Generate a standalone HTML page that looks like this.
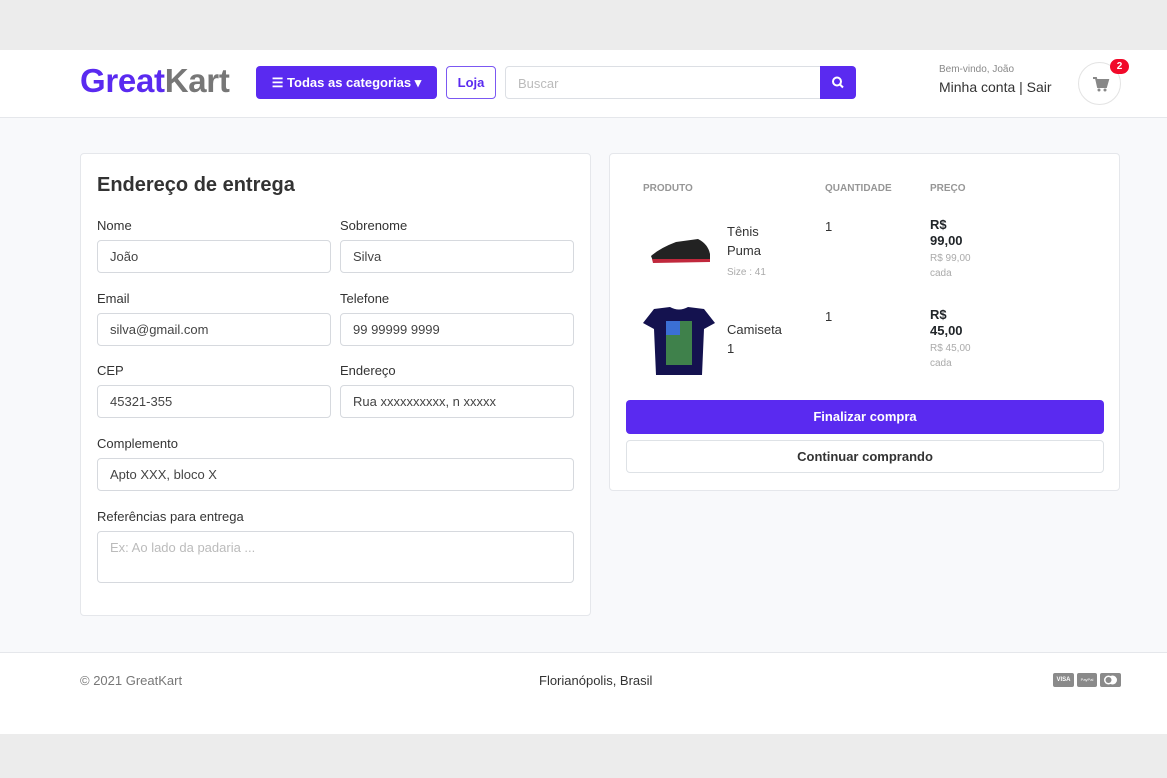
<!DOCTYPE html>
<html><head><meta charset="utf-8"><style>
*{box-sizing:border-box;margin:0;padding:0}
body{width:1167px;height:778px;background:#ececec;font-family:"Liberation Sans",sans-serif;color:#212529;position:relative;overflow:hidden}
.abs{position:absolute}
header{position:absolute;left:0;top:50px;width:1167px;height:68px;background:#fff;border-bottom:1px solid #e5e7eb}
main{position:absolute;left:0;top:118px;width:1167px;height:534px;background:#f8f9fb}
footer{position:absolute;left:0;top:652px;width:1167px;height:82px;background:#fff;border-top:1px solid #e5e7eb}
.card{position:absolute;background:#fff;border:1px solid #e5e7eb;border-radius:4px}
.lbl{position:absolute;font-size:13px;color:#333}
.inp{position:absolute;height:33px;border:1px solid #d6d9de;border-radius:4px;font-size:13px;color:#444;padding:8px 12px;width:234px}
.btn{position:absolute;border-radius:4px;font-size:13px;font-weight:bold;text-align:center}
.th{position:absolute;font-size:10px;font-weight:bold;color:#969696}
.t{position:absolute;font-size:13px;color:#333}
</style></head><body>
<header>
<div class="abs" style="left:80px;top:12px;font-size:33px;font-weight:bold;letter-spacing:-0.3px"><span style="color:#5a2af0">Great</span><span style="color:#777">Kart</span></div>
<div class="btn" style="left:256px;top:16px;width:181px;height:33px;background:#5a2af0;color:#fff;line-height:33px">☰ Todas as categorias ▾</div>
<div class="btn" style="left:446px;top:16px;width:50px;height:33px;border:1px solid #7b58f2;color:#5a2af0;line-height:31px">Loja</div>
<div class="abs" style="left:505px;top:16px;width:316px;height:33px;border:1px solid #dcdfe4;border-radius:4px 0 0 4px;font-size:13px;color:#bbb;padding:9px 12px">Buscar</div>
<div class="abs" style="left:820px;top:16px;width:36px;height:33px;background:#5a2af0;border-radius:0 4px 4px 0"><svg width="36" height="33"><circle cx="17" cy="15.5" r="4" stroke="#fff" stroke-width="2" fill="none"/><line x1="20" y1="18.5" x2="23" y2="21.5" stroke="#fff" stroke-width="2"/></svg></div>
<div class="abs" style="left:939px;top:14px;font-size:10px;color:#888">Bem-vindo, João</div>
<div class="abs" style="left:939px;top:29px;font-size:14px;color:#333">Minha conta | Sair</div>
<div class="abs" style="left:1078px;top:12px;width:43px;height:43px;border:1px solid #e3e3e3;border-radius:50%"><svg width="43" height="43"><path d="M14 15h3l2 9h8l2-7h-11" stroke="#888" stroke-width="2" fill="#888"/><circle cx="20" cy="27" r="1.5" fill="#888"/><circle cx="26" cy="27" r="1.5" fill="#888"/></svg></div>
<div class="abs" style="left:1110px;top:9px;width:19px;height:15px;background:#f10a2a;border-radius:8px;color:#fff;font-size:10px;font-weight:bold;text-align:center;line-height:15px">2</div>
</header>
<main>
<div class="card" style="left:80px;top:35px;width:511px;height:463px">
<div class="abs" style="left:16px;top:20px;font-size:20px;font-weight:bold;color:#333">Endereço de entrega</div>
<div class="lbl" style="left:16px;top:64px">Nome</div><div class="lbl" style="left:259px;top:64px">Sobrenome</div>
<div class="inp" style="left:16px;top:86px">João</div><div class="inp" style="left:259px;top:86px">Silva</div>
<div class="lbl" style="left:16px;top:137px">Email</div><div class="lbl" style="left:259px;top:137px">Telefone</div>
<div class="inp" style="left:16px;top:159px">silva@gmail.com</div><div class="inp" style="left:259px;top:159px">99 99999 9999</div>
<div class="lbl" style="left:16px;top:209px">CEP</div><div class="lbl" style="left:259px;top:209px">Endereço</div>
<div class="inp" style="left:16px;top:231px">45321-355</div><div class="inp" style="left:259px;top:231px">Rua xxxxxxxxxx, n xxxxx</div>
<div class="lbl" style="left:16px;top:282px">Complemento</div>
<div class="inp" style="left:16px;top:304px;width:477px">Apto XXX, bloco X</div>
<div class="lbl" style="left:16px;top:355px">Referências para entrega</div>
<div class="inp" style="left:16px;top:377px;width:477px;height:52px;color:#bbb">Ex: Ao lado da padaria ...</div>
</div>
<div class="card" style="left:609px;top:35px;width:511px;height:338px">
<div class="th" style="left:33px;top:29px">PRODUTO</div><div class="th" style="left:215px;top:29px">QUANTIDADE</div><div class="th" style="left:320px;top:29px">PREÇO</div>
<svg class="abs" style="left:38px;top:82px" width="66" height="30"><path d="M3 20 Q12 12 28 6 L50 3 Q60 8 62 18 L62 24 L5 25Z" fill="#222"/><path d="M4 23 L62 23 L62 26 L5 27Z" fill="#c0283c"/></svg>
<div class="t" style="left:117px;top:68px;line-height:19px">Tênis<br>Puma</div>
<div class="abs" style="left:117px;top:113px;font-size:10px;color:#aaa">Size : 41</div>
<div class="t" style="left:215px;top:65px">1</div>
<div class="abs" style="left:320px;top:63px;font-size:13px;font-weight:bold;line-height:16px">R$<br>99,00</div>
<div class="abs" style="left:320px;top:97px;font-size:10px;color:#aaa;line-height:15px">R$ 99,00<br>cada</div>
<svg class="abs" style="left:32px;top:153px" width="74" height="70"><path d="M12 2 L28 0 Q37 5 46 0 L62 2 L73 16 L62 22 L60 68 L14 68 L12 22 L1 16Z" fill="#14124f"/><rect x="24" y="14" width="26" height="44" fill="#4a9d4a" opacity=".8"/><rect x="24" y="14" width="14" height="14" fill="#3b6fd4"/></svg>
<div class="t" style="left:117px;top:166px;line-height:19px">Camiseta<br>1</div>
<div class="t" style="left:215px;top:155px">1</div>
<div class="abs" style="left:320px;top:153px;font-size:13px;font-weight:bold;line-height:16px">R$<br>45,00</div>
<div class="abs" style="left:320px;top:187px;font-size:10px;color:#aaa;line-height:15px">R$ 45,00<br>cada</div>
<div class="btn" style="left:16px;top:246px;width:478px;height:34px;background:#5a2af0;color:#fff;line-height:34px">Finalizar compra</div>
<div class="btn" style="left:16px;top:286px;width:478px;height:33px;border:1px solid #dee2e6;color:#333;line-height:31px">Continuar comprando</div>
</div>
</main>
<footer>
<div class="abs" style="left:80px;top:20px;font-size:13px;color:#777">© 2021 GreatKart</div>
<div class="abs" style="left:539px;top:20px;font-size:13px;color:#333">Florianópolis, Brasil</div>
<div class="abs" style="left:1053px;top:20px;width:21px;height:14px;background:#8a8a8a;border-radius:2px;color:#fff;font-size:6px;text-align:center;line-height:14px;font-weight:bold">VISA</div>
<div class="abs" style="left:1077px;top:20px;width:20px;height:14px;background:#8a8a8a;border-radius:2px;color:#fff;font-size:4px;text-align:center;line-height:14px">PayPal</div>
<div class="abs" style="left:1100px;top:20px;width:21px;height:14px;background:#8a8a8a;border-radius:2px"><svg width="21" height="14"><circle cx="8.5" cy="7" r="4.5" fill="#fff"/><circle cx="12.5" cy="7" r="4.5" fill="#fff"/><circle cx="8.5" cy="7" r="3" fill="#8a8a8a"/></svg></div>
</footer>
</body></html>
